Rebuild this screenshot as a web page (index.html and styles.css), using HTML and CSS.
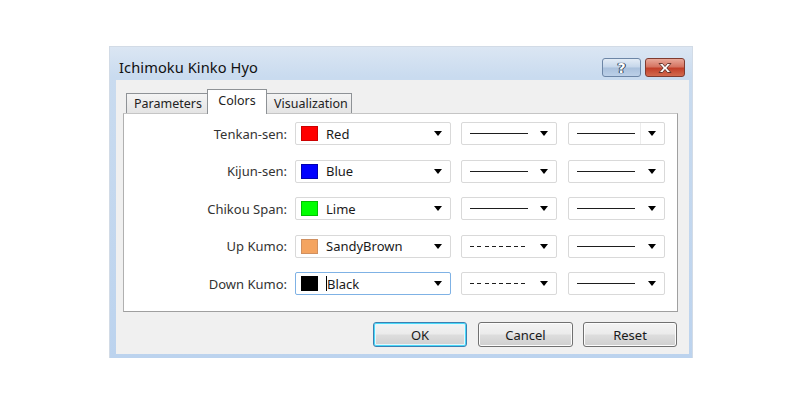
FILE: index.html
```html
<!DOCTYPE html>
<html>
<head>
<meta charset="utf-8">
<link rel="stylesheet" href="styles.css">
</head>
<body>
<div class="dialog">
  <div class="titlebar">
    <span class="title">Ichimoku Kinko Hyo</span>
    <div class="caption-btns">
      <div class="cbtn help">?</div>
      <div class="cbtn close">
        <svg width="16" height="12" viewBox="0 0 16 12"><path d="M2 1.5h3.5L8 4.5l2.5-3H14L9.8 6 14 10.5h-3.5L8 7.5l-2.5 3H2L6.2 6z" fill="#fff" stroke="#5a2a22" stroke-width="0.9" stroke-linejoin="round"/></svg>
      </div>
    </div>
  </div>
  <div class="client">
    <div class="tabs">
      <div class="tab">Parameters</div>
      <div class="tab active">Colors</div>
      <div class="tab">Visualization</div>
    </div>
    <div class="panel">
      <div class="grid">
        <div class="label">Tenkan-sen:</div>
        <div class="combo color"><span class="swatch red"></span><span class="cname">Red</span><span class="arrow"></span></div>
        <div class="combo style"><span class="line solid"></span><span class="arrow"></span></div>
        <div class="combo width"><span class="line solid"></span><span class="sep"></span><span class="arrow"></span></div>

        <div class="label">Kijun-sen:</div>
        <div class="combo color"><span class="swatch blue"></span><span class="cname">Blue</span><span class="arrow"></span></div>
        <div class="combo style"><span class="line solid"></span><span class="arrow"></span></div>
        <div class="combo width"><span class="line solid"></span><span class="arrow"></span></div>

        <div class="label">Chikou Span:</div>
        <div class="combo color"><span class="swatch lime"></span><span class="cname">Lime</span><span class="arrow"></span></div>
        <div class="combo style"><span class="line solid"></span><span class="arrow"></span></div>
        <div class="combo width"><span class="line solid"></span><span class="arrow"></span></div>

        <div class="label">Up Kumo:</div>
        <div class="combo color"><span class="swatch sandy"></span><span class="cname">SandyBrown</span><span class="arrow"></span></div>
        <div class="combo style"><span class="line dashed"></span><span class="arrow"></span></div>
        <div class="combo width"><span class="line solid"></span><span class="arrow"></span></div>

        <div class="label">Down Kumo:</div>
        <div class="combo color focused"><span class="swatch black"></span><span class="cname"><span class="caret"></span>Black</span><span class="arrow"></span></div>
        <div class="combo style"><span class="line dashed"></span><span class="arrow"></span></div>
        <div class="combo width"><span class="line solid"></span><span class="arrow"></span></div>
      </div>
    </div>
    <div class="buttons">
      <div class="btn default">OK</div>
      <div class="btn cancel">Cancel</div>
      <div class="btn">Reset</div>
    </div>
  </div>
</div>
</body>
</html>
```

FILE: styles.css
```css
* { box-sizing: border-box; }
html, body { margin: 0; background: #fff; }
body {
  padding: 47px 0 0 110px;
  font-family: "Noto Sans", "Open Sans", sans-serif;
  font-size: 13px;
  color: #1e1e1e;
}
.dialog {
  width: 582px;
  height: 311px;
  background: linear-gradient(#dbe6f3 0px, #c9dbef 30px, #bcd3ee 100%);
  padding: 0 3px 4px 6px;
  display: flex;
  flex-direction: column;
  box-shadow: 0 0 0 1px #d2dbe6;
}
.titlebar {
  height: 33px;
  display: flex;
  align-items: flex-start;
  justify-content: space-between;
  padding: 0 4px 0 3px;
}
.title {
  font-size: 14.6px;
  color: #111;
  margin-top: 10px;
  letter-spacing: 0.1px;
}
.caption-btns {
  display: flex;
  gap: 4px;
  margin-top: 11px;
}
.cbtn {
  height: 19px;
  border-radius: 3px;
  display: flex;
  align-items: center;
  justify-content: center;
}
.help {
  width: 39px;
  border: 1px solid #6d86a6;
  background: linear-gradient(#e3ecf6 0%, #c5d6ea 48%, #a9c0dc 52%, #bcd0e8 100%);
  color: #fff;
  font-weight: bold;
  font-size: 14px;
  font-family: "DejaVu Sans", sans-serif;
  text-shadow: 0 0 1px #2d3f58, 0 0 1px #2d3f58, 1px 0 0 #2d3f58, -1px 0 0 #2d3f58;
}
.close {
  width: 40px;
  border: 1px solid #7f3b30;
  background: linear-gradient(#e8a899 0%, #d57563 45%, #c2402a 55%, #d26a4f 100%);
}
.client {
  flex: 1;
  background: #f0f0f0;
  display: flex;
  flex-direction: column;
}
.tabs {
  height: 24px;
  margin-top: 9px;
  padding-left: 10px;
  display: flex;
  align-items: flex-end;
  position: relative;
  z-index: 1;
}
.tab {
  height: 20px;
  padding: 0 7px;
  border: 1px solid #8e9296;
  border-bottom: none;
  background: linear-gradient(#f4f4f4, #e4e4e4);
  display: flex;
  align-items: center;
  font-size: 12.5px;
  color: #222;
}
.tab + .tab { margin-left: -1px; }
.tab:nth-child(1) { width: 82px; }
.tab:nth-child(3) { width: 86px; }
.tab.active {
  height: 25px;
  width: 60px;
  margin-bottom: -1px;
  background: #fff;
  padding-bottom: 4px;
  justify-content: center;
}
.panel {
  margin-left: 7px;
  width: 555px;
  height: 199px;
  background: #fff;
  border: 1px solid #a7a7a7;
  border-color: #c5c5c5 #a0a0a0 #9f9f9f #b0b0b0;
}
.grid {
  display: grid;
  grid-template-columns: 171px 166px 107px 97px;
  grid-auto-rows: 23px;
  row-gap: 14.5px;
  padding-top: 8px;
}
.label {
  text-align: right;
  align-self: center;
  color: #333;
  font-size: 13px;
  padding-right: 8px;
}
.combo {
  border: 1px solid #d9d9d9;
  border-radius: 2px;
  background: #fff;
  display: flex;
  align-items: center;
}
.combo.color { width: 156px; }
.combo.style { width: 96px; }
.combo.width { width: 97px; }
.combo.focused { border-color: #7fb2e5; }
.swatch {
  width: 17px;
  height: 15px;
  margin-left: 5px;
  border: 1px solid #808080;
}
.red { background: #ff0000; border-color: #c00; }
.blue { background: #0000ff; border-color: #0000b0; }
.lime { background: #00ff00; border-color: #00c000; }
.sandy { background: #f4a460; border-color: #d09060; }
.black { background: #000; border-color: #000; }
.cname {
  margin-left: 8px;
  flex: 1;
  color: #1a1a1a;
  display: flex;
  align-items: center;
}
.caret {
  width: 1px;
  height: 15px;
  background: #000;
}
.arrow {
  width: 0;
  height: 0;
  border-left: 4.5px solid transparent;
  border-right: 4.5px solid transparent;
  border-top: 5px solid #000;
  margin-right: 8px;
}
.line {
  width: 58px;
  margin-left: 8px;
  margin-right: auto;
  height: 0;
}
.line.solid { border-top: 1px solid #1e1e1e; }
.line.dashed {
  height: 1px;
  background: repeating-linear-gradient(90deg, #1e1e1e 0 4px, transparent 4px 7.3px);
}
.sep {
  width: 1px;
  align-self: stretch;
  background: #ececec;
  margin-right: 7px;
}
.buttons {
  display: flex;
  justify-content: flex-end;
  gap: 10px;
  margin-top: 10px;
  padding-right: 12px;
}
.btn {
  width: 94px;
  height: 25px;
  border: 1px solid #707070;
  border-radius: 3px;
  background: linear-gradient(#f3f3f3 0%, #ebebeb 48%, #dddddd 52%, #cfcfcf 100%);
  box-shadow: inset 0 0 0 1px #fcfcfc;
  display: flex;
  align-items: center;
  justify-content: center;
  font-size: 13px;
  color: #1a1a1a;
}
.btn.cancel { width: 95px; }
.btn.default {
  margin-right: 1px;
  border-color: #3c7fb1;
  box-shadow: inset 0 0 0 1px #48d8f8, inset 0 0 0 2px #e6f6fc;
}
```
